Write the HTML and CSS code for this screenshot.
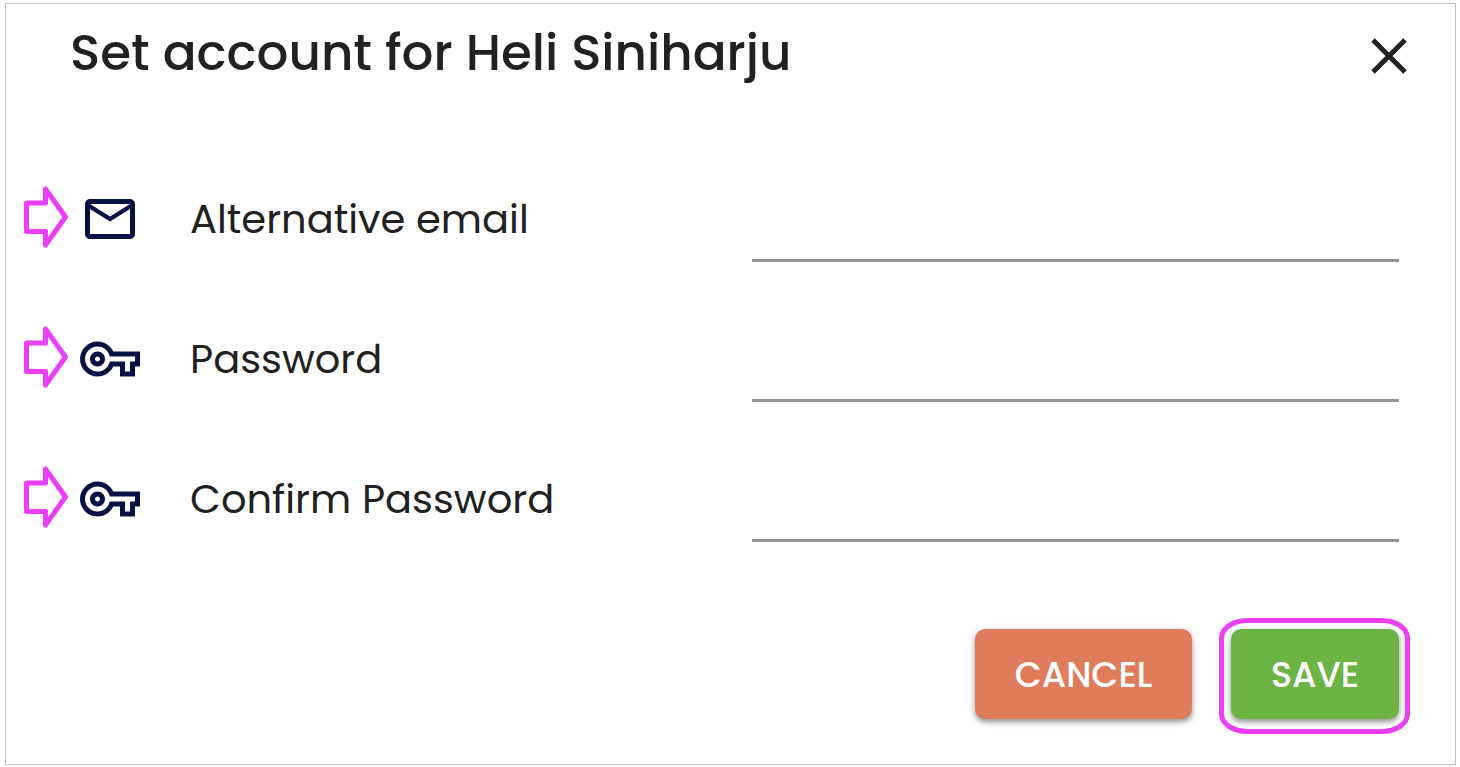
FILE: index.html
```html
<!DOCTYPE html>
<html lang="en">
<head>
  <meta charset="UTF-8">
  <meta name="viewport" content="width=device-width, initial-scale=1.0">
  <title>Set account</title>
  <link rel="stylesheet" href="styles.css">
</head>
<body>
  <form class="dialog">
    <header class="dialog-header">
      <h1 class="title">Set account for Heli Siniharju</h1>
      <button type="button" class="close" aria-label="Close">
        <svg viewBox="0 0 60 60"><path d="M14 14L46 46M46 14L14 46"/></svg>
      </button>
    </header>

    <div class="row">
      <svg class="arrow" viewBox="0 0 44 62"><path d="M2.5 17H21.500V3L41.500 31L21.500 59V45.500H2.500Z"/></svg>
      <svg class="icon" viewBox="0 0 24 24"><path d="M22 6c0-1.100-.9-2-2-2H4c-1.100 0-2 .9-2 2v12c0 1.100.9 2 2 2h16c1.100 0 2-.9 2-2V6zm-2 0l-8 5-8-5h16zm0 12H4V8l8 5 8-5v10z"/></svg>
      <label class="label" for="email">Alternative email</label>
      <input class="input" type="email" id="email">
    </div>

    <div class="row">
      <svg class="arrow" viewBox="0 0 44 62"><path d="M2.500 17H21.500V3L41.500 31L21.500 59V45.500H2.500Z"/></svg>
      <svg class="icon" viewBox="0 0 24 24"><path d="M22 19h-6v-4h-2.680c-1.140 2.420-3.600 4-6.320 4-3.860 0-7-3.140-7-7s3.140-7 7-7c2.720 0 5.170 1.580 6.320 4H24v6h-2v4zm-4-2h2v-4h2v-2H11.940l-.23-.67C11.010 8.340 9.110 7 7 7c-2.760 0-5 2.240-5 5s2.240 5 5 5c2.110 0 4.010-1.340 4.710-3.330l.23-.67H18v4zM7 15c-1.650 0-3-1.350-3-3s1.350-3 3-3 3 1.350 3 3-1.350 3-3 3zm0-4c-.55 0-1 .45-1 1s.45 1 1 1 1-.45 1-1-.45-1-1-1z"/></svg>
      <label class="label" for="password">Password</label>
      <input class="input" type="password" id="password">
    </div>

    <div class="row">
      <svg class="arrow" viewBox="0 0 44 62"><path d="M2.500 17H21.500V3L41.500 31L21.500 59V45.500H2.500Z"/></svg>
      <svg class="icon" viewBox="0 0 24 24"><path d="M22 19h-6v-4h-2.680c-1.140 2.420-3.600 4-6.320 4-3.860 0-7-3.140-7-7s3.140-7 7-7c2.720 0 5.170 1.580 6.320 4H24v6h-2v4zm-4-2h2v-4h2v-2H11.940l-.23-.67C11.010 8.340 9.110 7 7 7c-2.760 0-5 2.240-5 5s2.240 5 5 5c2.110 0 4.010-1.340 4.710-3.330l.23-.67H18v4zM7 15c-1.650 0-3-1.350-3-3s1.350-3 3-3 3 1.350 3 3-1.350 3-3 3zm0-4c-.55 0-1 .45-1 1s.45 1 1 1 1-.45 1-1-.45-1-1-1z"/></svg>
      <label class="label" for="confirm">Confirm Password</label>
      <input class="input" type="password" id="confirm">
    </div>

    <div class="actions">
      <button type="button" class="button cancel">CANCEL</button>
      <button type="submit" class="button save">SAVE</button>
    </div>
  </form>
</body>
</html>
```
FILE: styles.css
```css
* {
  margin: 0;
  padding: 0;
  box-sizing: border-box;
}

body {
  padding: 3px 4px 2px 5px;
  background: #fff;
  color: #212121;
  font-family: Poppins, Inter, sans-serif;
}

.dialog {
  min-height: calc(100vh - 5px);
  border: 1px solid #c0c0c0;
}

.dialog-header {
  display: flex;
  justify-content: space-between;
  align-items: flex-start;
  padding: 22px 36px 63px 64px;
}

.title {
  font-size: 50px;
  font-weight: 500;
  line-height: 54px;
}

.close {
  width: 60px;
  height: 60px;
  border: none;
  background: none;
  cursor: pointer;
}

.close svg {
  display: block;
  fill: none;
  stroke: #212121;
  stroke-width: 5;
}

.row {
  display: flex;
  align-items: center;
  height: 140px;
  padding: 0 56px 0 18px;
}

.arrow {
  flex: none;
  width: 44px;
  height: 62px;
  margin: 0 12px 4px 0;
  fill: none;
  stroke: #ea3ff7;
  stroke-width: 5;
  stroke-linejoin: round;
}

.icon {
  flex: none;
  width: 60px;
  height: 60px;
  margin-right: 50px;
  fill: #051243;
}

.label {
  flex: 87 1 0;
  font-size: 40px;
  line-height: 60px;
}

.input {
  flex: 100 1 0;
  min-width: 0;
  height: 86px;
  border: none;
  border-bottom: 3px solid #949494;
  background: none;
  font: inherit;
  font-size: 40px;
  outline: none;
}

.actions {
  display: flex;
  justify-content: flex-end;
  gap: 39px;
  padding: 60px 56px 45px;
}

.button {
  position: relative;
  min-width: 168px;
  height: 90px;
  padding: 0 36px;
  border: none;
  border-radius: 10px;
  color: #fff;
  font: inherit;
  font-size: 35px;
  font-weight: 500;
  box-shadow: 0 3px 5px rgba(0, 0, 0, 0.35), 0 2px 12px rgba(0, 0, 0, 0.12);
  cursor: pointer;
}

.cancel {
  min-width: 217px;
  background: #df7c5c;
}

.save {
  background: #6cb444;
}

/* highlight ring around the save button */
.save::after {
  content: "";
  position: absolute;
  inset: -11px -11px -15px -12px;
  border: 5px solid #ea3ff7;
  border-radius: 28px / 20px;
}
```
